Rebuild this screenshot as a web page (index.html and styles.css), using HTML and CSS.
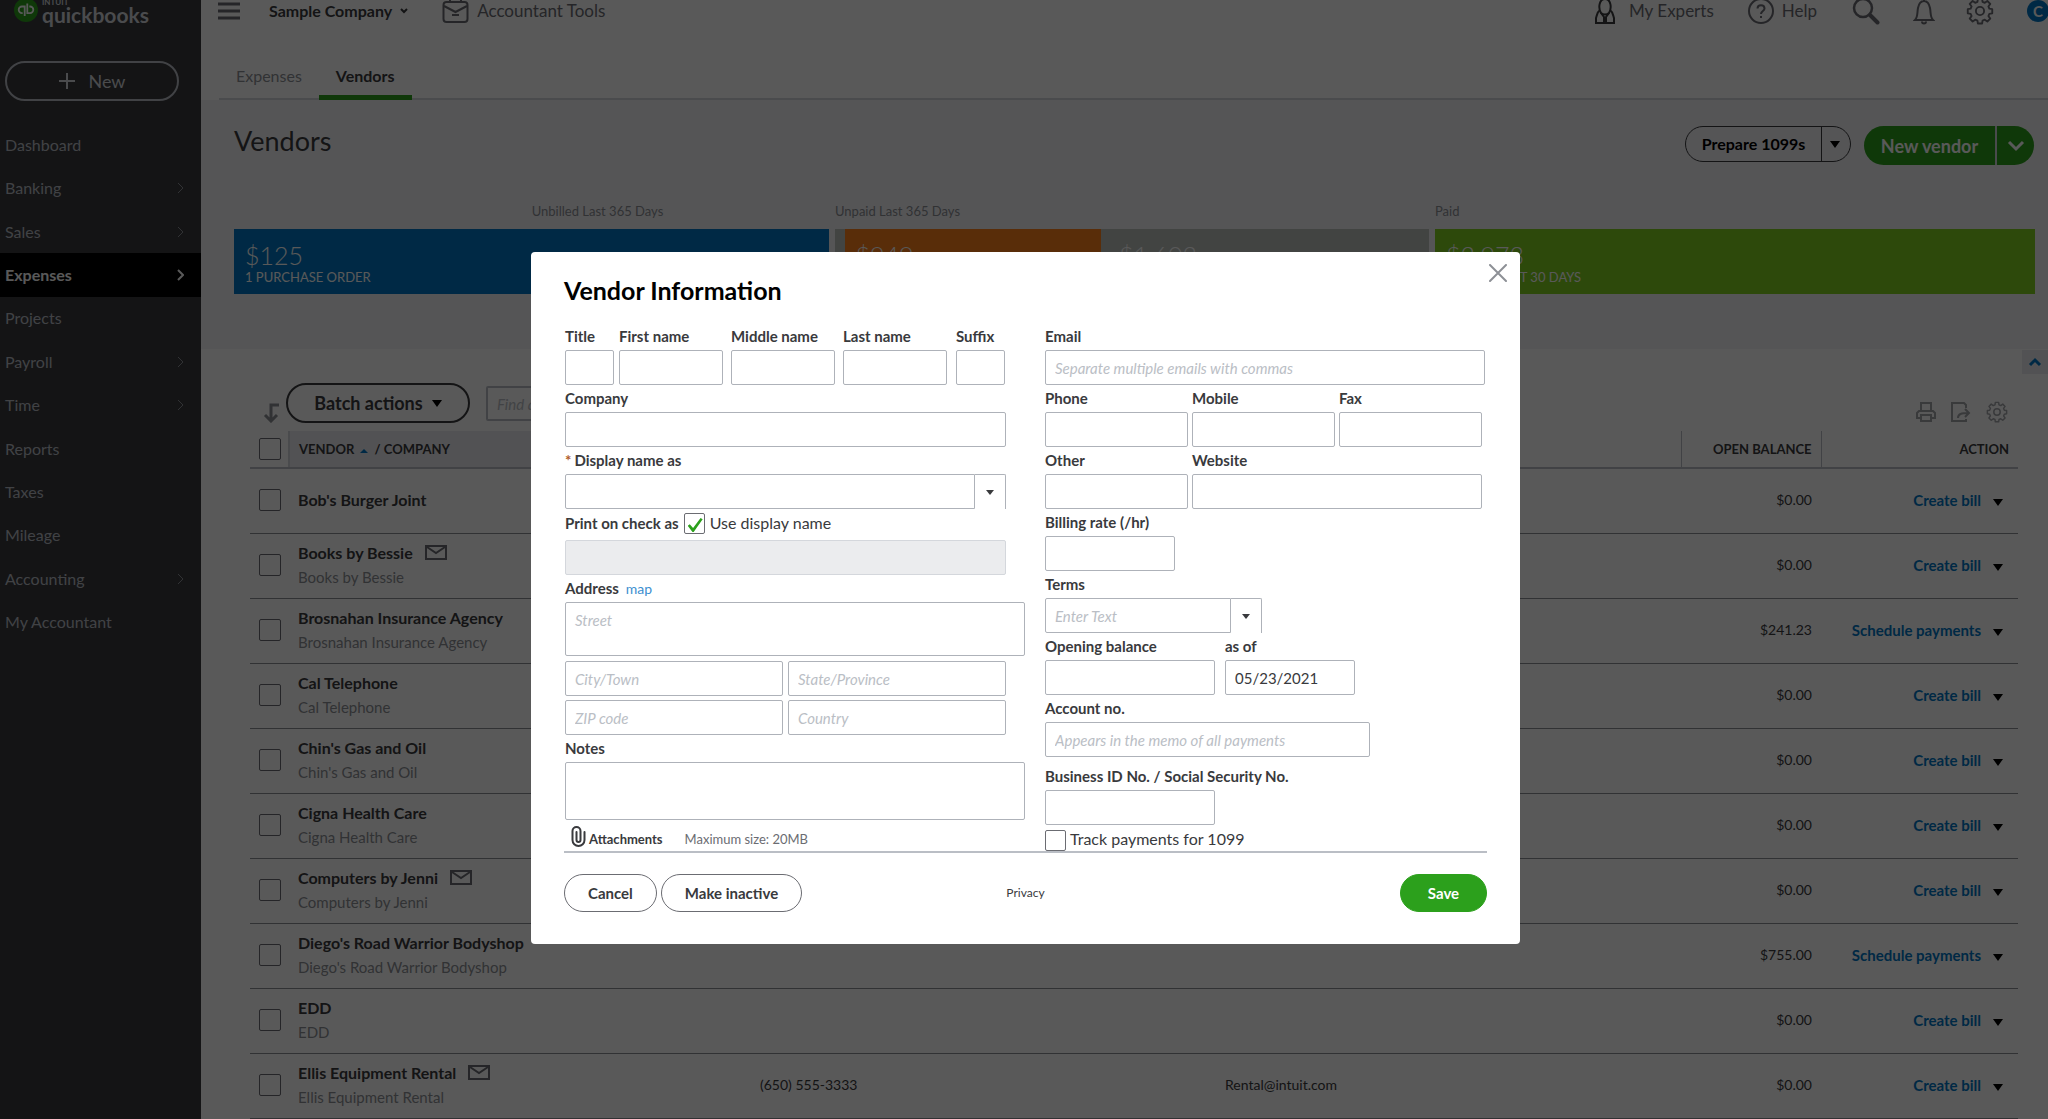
FILE: index.html
```html
<!DOCTYPE html>
<html lang="en">
<head>
<meta charset="utf-8">
<title>Vendors</title>
<link rel="stylesheet" href="styles.css">
</head>
<body>
<div class="app">
  <aside class="sidebar">
    <div class="brand">
      <svg class="brand-mark" viewBox="0 0 24 24"><circle cx="12" cy="12" r="12" fill="#2ca01c"/><g fill="none" stroke="#fff" stroke-width="1.800"><path d="M10.700 18V8.500H8a3.300 3.300 0 0 0 0 6.600h.7"/><path d="M13.300 5.500v9.600H16a3.300 3.300 0 0 0 0-6.600h-.7"/></g></svg>
      <div class="brand-name"><span class="brand-top">INTUIT</span><span class="brand-main">quickbooks</span></div>
    </div>
    <button class="new-btn" type="button"><svg width="18" height="18" viewBox="0 0 18 18"><path d="M9 1v16M1 9h16" stroke="currentColor" stroke-width="2"/></svg>New</button>
    <nav class="nav">
      <a href="#">Dashboard</a>
      <a href="#">Banking<svg class="chev" viewBox="0 0 7 12"><path d="M1 1l5 5-5 5"/></svg></a>
      <a href="#">Sales<svg class="chev" viewBox="0 0 7 12"><path d="M1 1l5 5-5 5"/></svg></a>
      <a href="#" class="active">Expenses<svg class="chev" viewBox="0 0 7 12"><path d="M1 1l5 5-5 5"/></svg></a>
      <a href="#">Projects</a>
      <a href="#">Payroll<svg class="chev" viewBox="0 0 7 12"><path d="M1 1l5 5-5 5"/></svg></a>
      <a href="#">Time<svg class="chev" viewBox="0 0 7 12"><path d="M1 1l5 5-5 5"/></svg></a>
      <a href="#">Reports</a>
      <a href="#">Taxes</a>
      <a href="#">Mileage</a>
      <a href="#">Accounting<svg class="chev" viewBox="0 0 7 12"><path d="M1 1l5 5-5 5"/></svg></a>
      <a href="#">My Accountant</a>
    </nav>
  </aside>

  <main class="main">
    <header class="topbar">
      <svg class="burger" width="22" height="18" viewBox="0 0 22 18"><path d="M0 2h22M0 9h22M0 16h22" stroke="#6b6c72" stroke-width="3"/></svg>
      <button class="company" type="button">Sample Company <svg width="8" height="6" viewBox="0 0 8 6"><path d="M1 1l3 3 3-3" fill="none" stroke="#393a3d" stroke-width="2"/></svg></button>
      <a class="tool" href="#"><svg width="27" height="26" viewBox="0 0 27 26"><g fill="none" stroke="#6b6c72" stroke-width="2"><rect x="1.500" y="4" width="24" height="20" rx="3"/><path d="M8 4V0M19 4V0M2 8l11.500 6L25 8M10 17h7"/></g></svg>Accountant Tools</a>
      <div class="top-right">
        <a class="tool experts" href="#"><svg width="20" height="28" viewBox="0 0 20 28"><g fill="none" stroke="#393a3d" stroke-width="2"><path d="M6 16C3 11 4 2 10 2s7 9 4 14c-2 2-6 2-8 0z"/><path d="M5 13c-3 2-3 5-4 8v5h18v-5c-1-3-1-6-4-8M6 16l3 4v6M14 16l-3 4v6"/></g></svg>My Experts</a>
        <a class="tool help" href="#"><svg width="26" height="26" viewBox="0 0 26 26"><g fill="none" stroke="#6b6c72" stroke-width="2"><circle cx="13" cy="13" r="12"/><path d="M9.500 10.500c0-4.500 7-4.500 7 0 0 2.500-3.500 2.500-3.500 5.500M13 18v2"/></g></svg>Help</a>
        <svg class="t-search" width="28" height="28" viewBox="0 0 28 28"><g fill="none" stroke="#6b6c72"><circle cx="11" cy="11" r="9" stroke-width="2.500"/><path d="M18 18l7.500 7.500" stroke-width="4" stroke-linecap="round"/></g></svg>
        <svg class="t-bell" width="22" height="28" viewBox="0 0 22 28"><path d="M2 23h18c-3-3-2-7-3-12C16 6 14 4 11 4s-5 2-6 7c-1 5 0 9-3 12zM9 24.500a2 2 0 0 0 4 0M11 4V1" fill="none" stroke="#6b6c72" stroke-width="2"/></svg>
        <svg class="t-gear" width="28" height="28" viewBox="0 0 24 24"><g fill="none" stroke="#6b6c72" stroke-width="1.600" stroke-linejoin="round"><path d="M10.200 1.500h3.600l.4 2.700 1.900.8 2.200-1.600 2.500 2.500-1.600 2.200.8 1.900 2.500.4v3.600l-2.500.4-.8 1.900 1.600 2.200-2.500 2.500-2.200-1.600-1.900.8-.4 2.500h-3.600l-.4-2.500-1.900-.8-2.200 1.600-2.500-2.500 1.600-2.200-.8-1.900-2.500-.4v-3.600l2.500-.4.8-1.900-1.600-2.200 2.500-2.500 2.200 1.600 1.900-.8z"/><circle cx="12" cy="12" r="3.500"/></g></svg>
        <span class="avatar">C</span>
      </div>
    </header>

    <nav class="tabs">
      <a href="#">Expenses</a>
      <a href="#" class="current">Vendors</a>
    </nav>

    <section class="hero">
      <div class="hero-head">
        <h1>Vendors</h1>
        <div class="split outline"><button type="button">Prepare 1099s</button><button type="button" aria-label="More 1099 options"><svg width="10" height="7" viewBox="0 0 10 7"><path d="M0 0h10L5 7z" fill="#000"/></svg></button></div>
        <div class="split solid"><button type="button">New vendor</button><button type="button" aria-label="More vendor options"><svg width="18" height="12" viewBox="0 0 18 12"><path d="M2 2l7 7 7-7" fill="none" stroke="#fff" stroke-width="3"/></svg></button></div>
      </div>
      <div class="money">
        <div class="group unbilled"><span class="cap">Unbilled Last 365 Days</span>
          <div class="bars"><div class="bar blue"><b>$125</b><span>1 PURCHASE ORDER</span></div></div></div>
        <div class="group unpaid"><span class="cap">Unpaid Last 365 Days</span>
          <div class="bars"><div class="bar sliver"></div><div class="bar orange"><b>$949</b><span>3 OVERDUE</span></div><div class="bar grey"><b>$1,603</b><span>5 OPEN BILLS</span></div></div></div>
        <div class="group paid"><span class="cap">Paid</span>
          <div class="bars"><div class="bar green"><b>$3,973</b><span>12 PAID LAST 30 DAYS</span></div></div></div>
      </div>
    </section>

    <section class="list">
      <button class="collapse" type="button" aria-label="Collapse"><svg width="14" height="10" viewBox="0 0 14 10"><path d="M2 8l5-5 5 5" fill="none" stroke="#0077c5" stroke-width="3"/></svg></button>
      <div class="tools">
        <svg class="move" width="18" height="20" viewBox="0 0 18 20"><path d="M16 2H8v16M2 12l6 6 6-6" fill="none" stroke="#8d9096" stroke-width="3"/></svg>
        <button class="batch" type="button">Batch actions <svg width="10" height="7" viewBox="0 0 10 7"><path d="M0 0h10L5 7z" fill="#000"/></svg></button>
        <input class="find" type="text" aria-label="Find a vendor" placeholder="Find a vendor or company">
        <div class="list-icons">
          <svg width="20" height="20" viewBox="0 0 20 20"><g fill="none" stroke="#a3a5aa" stroke-width="2"><path d="M5 9V1h10v8"/><path d="M5 16H1v-5l2-2h14l2 2v5h-4"/><path d="M5 13h10v6H5z"/></g></svg>
          <svg width="20" height="20" viewBox="0 0 20 20"><g fill="none" stroke="#a3a5aa" stroke-width="2"><path d="M15 6V3l-2-2H1v18h14v-2"/><path d="M7 16c0-4 3-5 11-5M14 7l4 4-4 4"/></g></svg>
          <svg width="22" height="22" viewBox="0 0 24 24"><g fill="none" stroke="#a3a5aa" stroke-width="1.600" stroke-linejoin="round"><path d="M10.200 1.500h3.600l.4 2.700 1.900.8 2.200-1.600 2.500 2.500-1.600 2.200.8 1.900 2.500.4v3.600l-2.500.4-.8 1.900 1.600 2.200-2.500 2.500-2.200-1.600-1.900.8-.4 2.500h-3.600l-.4-2.500-1.900-.8-2.200 1.600-2.500-2.500 1.600-2.200-.8-1.900-2.500-.4v-3.600l2.500-.4.8-1.900-1.600-2.200 2.500-2.500 2.200 1.600 1.900-.8z"/><circle cx="12" cy="12" r="3.500"/></g></svg>
        </div>
      </div>
      <table class="vendors">
        <colgroup><col class="c-check"><col class="c-name"><col class="c-phone"><col class="c-mail"><col class="c-bal"><col class="c-act"></colgroup>
        <thead><tr><th><input type="checkbox" aria-label="Select all"></th><th class="sorted">VENDOR <svg width="8" height="4" viewBox="0 0 8 4"><path d="M0 4l4-4 4 4z" fill="#0077c5"/></svg> / COMPANY</th><th></th><th></th><th class="num">OPEN BALANCE</th><th class="act">ACTION</th></tr></thead>
        <tbody>
          <tr><td><input type="checkbox" aria-label="Bob's Burger Joint"></td><td><strong>Bob's Burger Joint</strong></td><td></td><td></td><td class="num">$0.00</td><td class="act"><a href="#">Create bill</a><i class="caret"></i></td></tr>
          <tr><td><input type="checkbox" aria-label="Books by Bessie"></td><td><strong>Books by Bessie<svg class="mail" viewBox="0 0 22 15"><path d="M1 1h20v13H1zM2 2l9 6 9-6"/></svg></strong><small>Books by Bessie</small></td><td></td><td></td><td class="num">$0.00</td><td class="act"><a href="#">Create bill</a><i class="caret"></i></td></tr>
          <tr><td><input type="checkbox" aria-label="Brosnahan Insurance Agency"></td><td><strong>Brosnahan Insurance Agency</strong><small>Brosnahan Insurance Agency</small></td><td></td><td></td><td class="num">$241.23</td><td class="act"><a href="#">Schedule payments</a><i class="caret"></i></td></tr>
          <tr><td><input type="checkbox" aria-label="Cal Telephone"></td><td><strong>Cal Telephone</strong><small>Cal Telephone</small></td><td></td><td></td><td class="num">$0.00</td><td class="act"><a href="#">Create bill</a><i class="caret"></i></td></tr>
          <tr><td><input type="checkbox" aria-label="Chin's Gas and Oil"></td><td><strong>Chin's Gas and Oil</strong><small>Chin's Gas and Oil</small></td><td></td><td></td><td class="num">$0.00</td><td class="act"><a href="#">Create bill</a><i class="caret"></i></td></tr>
          <tr><td><input type="checkbox" aria-label="Cigna Health Care"></td><td><strong>Cigna Health Care</strong><small>Cigna Health Care</small></td><td></td><td></td><td class="num">$0.00</td><td class="act"><a href="#">Create bill</a><i class="caret"></i></td></tr>
          <tr><td><input type="checkbox" aria-label="Computers by Jenni"></td><td><strong>Computers by Jenni<svg class="mail" viewBox="0 0 22 15"><path d="M1 1h20v13H1zM2 2l9 6 9-6"/></svg></strong><small>Computers by Jenni</small></td><td></td><td></td><td class="num">$0.00</td><td class="act"><a href="#">Create bill</a><i class="caret"></i></td></tr>
          <tr><td><input type="checkbox" aria-label="Diego's Road Warrior Bodyshop"></td><td><strong>Diego's Road Warrior Bodyshop</strong><small>Diego's Road Warrior Bodyshop</small></td><td></td><td></td><td class="num">$755.00</td><td class="act"><a href="#">Schedule payments</a><i class="caret"></i></td></tr>
          <tr><td><input type="checkbox" aria-label="EDD"></td><td><strong>EDD</strong><small>EDD</small></td><td></td><td></td><td class="num">$0.00</td><td class="act"><a href="#">Create bill</a><i class="caret"></i></td></tr>
          <tr><td><input type="checkbox" aria-label="Ellis Equipment Rental"></td><td><strong>Ellis Equipment Rental<svg class="mail" viewBox="0 0 22 15"><path d="M1 1h20v13H1zM2 2l9 6 9-6"/></svg></strong><small>Ellis Equipment Rental</small></td><td>(650) 555-3333</td><td>Rental@intuit.com</td><td class="num">$0.00</td><td class="act"><a href="#">Create bill</a><i class="caret"></i></td></tr>
        </tbody>
      </table>
    </section>
  </main>
</div>

<div class="overlay">
  <form class="modal" role="dialog" aria-labelledby="dlg-title">
    <header class="modal-head">
      <h2 id="dlg-title">Vendor Information</h2>
      <button class="close" type="button" aria-label="Close"><svg width="18" height="18" viewBox="0 0 18 18"><path d="M1 1l16 16M17 1L1 17" stroke="#8d9096" stroke-width="2" stroke-linecap="round"/></svg></button>
    </header>
    <div class="cols">
      <div class="col">
        <div class="row names">
          <div class="field"><label for="title">Title</label><input id="title" type="text"></div>
          <div class="field"><label for="first">First name</label><input id="first" type="text"></div>
          <div class="field"><label for="middle">Middle name</label><input id="middle" type="text"></div>
          <div class="field"><label for="last">Last name</label><input id="last" type="text"></div>
          <div class="field"><label for="suffix">Suffix</label><input id="suffix" type="text"></div>
        </div>
        <div class="field inset"><label for="company">Company</label><input id="company" type="text"></div>
        <div class="field inset"><label for="display"><span class="req">*</span> Display name as</label>
          <div class="combo"><input id="display" type="text"><button type="button" aria-label="Show names"><i class="caret small"></i></button></div></div>
        <div class="field inset check-as">
          <div class="line"><label for="printas">Print on check as</label><input id="usedisp" type="checkbox" checked><label class="plain" for="usedisp">Use display name</label></div>
          <input id="printas" type="text" disabled></div>
        <div class="field"><div class="line"><label for="street">Address</label><a class="map" href="#">map</a></div><textarea id="street" placeholder="Street"></textarea></div>
        <div class="pair inset"><input type="text" aria-label="City" placeholder="City/Town"><input type="text" aria-label="State" placeholder="State/Province"><input type="text" aria-label="ZIP" placeholder="ZIP code"><input type="text" aria-label="Country" placeholder="Country"></div>
        <div class="field"><label for="notes">Notes</label><textarea id="notes" class="notes"></textarea></div>
        <div class="attach"><svg width="15" height="21" viewBox="0 0 15 21"><path d="M5.500 6v8a2 2 0 0 0 4 0V5a4 4 0 0 0-8 0v9a6 6 0 0 0 12 0V6" fill="none" stroke="#393a3d" stroke-width="2" stroke-linecap="round"/></svg><b>Attachments</b><span>Maximum size: 20MB</span></div>
      </div>
      <div class="col">
        <div class="field"><label for="email">Email</label><input id="email" type="text" placeholder="Separate multiple emails with commas"></div>
        <div class="row phones">
          <div class="field"><label for="phone">Phone</label><input id="phone" type="text"></div>
          <div class="field"><label for="mobile">Mobile</label><input id="mobile" type="text"></div>
          <div class="field"><label for="fax">Fax</label><input id="fax" type="text"></div>
          <div class="field"><label for="other">Other</label><input id="other" type="text"></div>
          <div class="field wide"><label for="site">Website</label><input id="site" type="text"></div>
        </div>
        <div class="field w-s"><label for="rate">Billing rate (/hr)</label><input id="rate" type="text"></div>
        <div class="field w-l"><label for="terms">Terms</label>
          <div class="combo"><input id="terms" type="text" placeholder="Enter Text"><button type="button" aria-label="Show terms"><i class="caret small"></i></button></div></div>
        <div class="row balance">
          <div class="field w-m"><label for="open">Opening balance</label><input id="open" type="text"></div>
          <div class="field w-s"><label for="asof">as of</label><input id="asof" type="text" value="05/23/2021"></div>
        </div>
        <div class="field w-xl"><label for="acct">Account no.</label><input id="acct" type="text" placeholder="Appears in the memo of all payments"></div>
        <div class="field w-m spaced"><label for="bid">Business ID No. / Social Security No.</label><input id="bid" type="text"></div>
        <div class="track"><input id="track" type="checkbox"><label class="plain" for="track">Track payments for 1099</label></div>
      </div>
    </div>
    <footer class="modal-foot">
      <div class="left"><button type="button" class="pill">Cancel</button><button type="button" class="pill">Make inactive</button></div>
      <a href="#">Privacy</a>
      <button type="submit" class="save">Save</button>
    </footer>
  </form>
</div>
</body>
</html>
```
FILE: styles.css
```css
* { box-sizing: border-box; }
html, body { height: 100%; }
body { margin: 0; overflow: hidden; font: 15px/20px Lato, "Open Sans", sans-serif; color: #393a3d; background: #fff; }
button, input, textarea { font: inherit; color: inherit; margin: 0; }
button { background: none; border: 0; padding: 0; cursor: pointer; display: flex; align-items: center; justify-content: center; }
a { color: inherit; text-decoration: none; }
svg { flex: none; display: block; }
input[type="checkbox"] { appearance: none; flex: none; display: block; width: 22px; height: 22px; border: 1px solid #6b6c72; border-radius: 2px; background: #fff; }

.app { display: flex; min-height: 100%; }

/* sidebar */
.sidebar { width: 201px; flex: none; background: #393a3e; color: #babec5; }
.brand { display: flex; align-items: center; gap: 4px; height: 20px; padding-left: 14px; color: #d4d7dc; }
.brand-mark { width: 24px; height: 24px; }
.brand-name { display: flex; flex-direction: column; }
.brand-top { font-size: 8px; line-height: 10px; font-weight: 700; }
.brand-main { font-size: 21px; line-height: 16px; font-weight: 700; }
.new-btn { width: 174px; height: 40px; margin: 41px 0 22px 5px; gap: 12px; border: 2px solid #babec5; border-radius: 20px; font-size: 18px; color: #d4d7dc; }
.nav { display: grid; grid-auto-rows: 1fr; height: 521px; font-size: 16px; }
.nav a { display: flex; align-items: center; justify-content: space-between; padding: 0 17px 0 5px; }
.nav .active { background: #000; color: #fff; font-weight: 700; }
.chev { width: 7px; height: 12px; fill: none; stroke: #8d9096; stroke-width: 1; }
.active .chev { stroke: #fff; stroke-width: 2; }

/* top bar */
.main { flex: 1; min-width: 0; }
.topbar { display: flex; align-items: center; height: 21px; padding-left: 17px; }
.company { margin: 0 34px 0 29px; gap: 8px; font-size: 16px; font-weight: 700; }
.tool { display: flex; align-items: center; gap: 8px; font-size: 17px; color: #6b6c72; }
.top-right { display: flex; align-items: center; margin-left: auto; }
.experts { gap: 14px; margin-right: 34px; }
.help { margin-right: 35px; }
.t-search { margin-right: 33px; }
.t-bell { margin-right: 31px; }
.t-gear { margin-right: 33px; }
.avatar { width: 22px; height: 22px; margin-right: -1px; border-radius: 50%; background: #0077c5; color: #fff; font-size: 15px; line-height: 22px; font-weight: 700; text-align: center; }

.tabs { display: flex; height: 79px; margin-left: 18px; align-items: flex-end; border-bottom: 2px solid #d4d7dc; color: #8d9096; font-size: 16px; }
.tabs a { padding: 0 17px; height: 34px; margin-bottom: -2px; border-bottom: 5px solid transparent; }
.tabs .current { color: #393a3d; font-weight: 700; border-color: #2ca01c; }

/* page heading and money bar */
.hero { height: 249px; padding: 26px 13px 0 33px; background: #f4f4f7; }
.hero-head { display: flex; align-items: flex-start; gap: 13px; height: 75px; padding-right: 1px; }
.hero h1 { margin: 0 auto 0 0; font-size: 27px; line-height: 30px; font-weight: 400; }
.split { display: flex; border-radius: 20px; font-weight: 700; }
.split button:first-child { flex: 1; }
.outline { width: 166px; height: 36px; border: 1px solid #393a3d; font-size: 16px; color: #000; }
.outline button + button { width: 29px; border-left: 1px solid #393a3d; padding-right: 2px; }
.solid { width: 170px; height: 39px; background: #2ca01c; color: #fff; font-size: 18px; }
.solid button + button { width: 39px; border-left: 2px solid #d4d7dc; }
.money { display: flex; gap: 6px; }
.group { display: flex; flex-direction: column; }
.unbilled { flex: 595; }
.unpaid { flex: 594; }
.paid { flex: 600; }
.cap { height: 28px; font-size: 13px; color: #8d9096; }
.unbilled .cap { align-self: center; padding-left: 132px; }
.bars { display: flex; height: 65px; }
.bar { flex: 1; padding: 12px 0 0 11px; color: #fff; white-space: nowrap; overflow: hidden; }
.bar b { display: block; font-size: 25px; line-height: 28px; font-weight: 300; }
.bar span { display: block; font-size: 13px; line-height: 16px; }
.blue { background: #0077c5; }
.sliver { flex: 10; padding: 0; background: #bdc2bd; }
.orange { flex: 258; background: #ff801c; }
.grey { flex: 326; padding-left: 18px; background: #bdc2bd; }
.green { background: #80d022; }

/* list */
.list { position: relative; padding: 34px 30px 0 49px; }
.collapse { position: absolute; top: 1px; right: 0; width: 26px; height: 24px; background: #ececf0; }
.tools { display: flex; height: 48px; padding-left: 13px; }
.move { margin: 20px 5px 0 0; }
.batch { width: 184px; height: 40px; gap: 9px; border: 2px solid #393a3d; border-radius: 20px; font-size: 18px; font-weight: 700; }
.find { width: 300px; height: 35px; margin: 3px 0 0 16px; padding: 0 9px; border: 2px solid #babec5; border-radius: 2px; font-size: 15px; }
.list-icons { display: flex; align-items: center; gap: 15px; height: 20px; margin: 19px 10px 0 auto; }
.vendors { width: 100%; table-layout: fixed; border-collapse: collapse; font-size: 14px; }
.c-check { width: 39px; }
.c-name { width: 471px; }
.c-phone { width: 465px; }
.c-bal { width: 140px; }
.c-act { width: 197px; }
.vendors th { height: 37px; padding: 0; text-align: left; font-size: 13px; font-weight: 700; border-bottom: 2px solid #babec5; }
.vendors td { height: 65px; padding: 0 0 2px; border-bottom: 1px solid #8d9096; }
.vendors tbody tr td:first-child { padding-left: 9px; }
.vendors th:first-child { padding-left: 9px; }
.vendors th.sorted { padding-left: 9px; background: #ececf0; border-left: 2px solid #d4d7dc; }
.vendors th svg { display: inline-block; vertical-align: middle; margin: 0 3px; }
.vendors td:nth-child(2) { padding-left: 9px; }
.vendors td.num, .vendors th.num { padding-right: 9px; text-align: right; }
.vendors th.num { border-left: 1px solid #babec5; border-right: 1px solid #babec5; }
.vendors th.act { padding-right: 9px; text-align: right; }
.vendors td.act { padding-right: 15px; text-align: right; font-size: 15px; font-weight: 700; color: #0077c5; }
.vendors strong { display: flex; align-items: center; gap: 12px; font-size: 16px; line-height: 24px; }
.vendors small { display: block; font-size: 15px; line-height: 24px; color: #8d9096; }
.mail { width: 22px; height: 15px; fill: none; stroke: #6b6c72; stroke-width: 2; }
.caret { display: inline-block; margin-left: 12px; border: 5px solid transparent; border-top: 7px solid #000; border-bottom: 0; }
.caret.small { margin: 0; border-width: 5px 4px 0; border-top-color: #393a3d; }

/* dialog */
.overlay { position: fixed; inset: 0; display: flex; align-items: flex-start; justify-content: center; padding: 252px 0 0 3px; background: rgba(0, 0, 0, .65); }
.modal { width: 989px; padding: 20px 33px 32px; border-radius: 4px; background: #fff; }
.modal-head { display: flex; justify-content: space-between; height: 51px; }
.modal-head h2 { margin: 0; font-size: 25px; line-height: 36px; font-weight: 700; color: #000; }
.close { width: 18px; height: 18px; margin: -8px -20px 0 0; }
.cols { display: grid; grid-template-columns: 460px 440px; gap: 20px; padding-left: 1px; border-bottom: 2px solid #babec5; }
.field label, .field .line { display: flex; height: 27px; align-items: center; font-weight: 700; }
.field label { gap: 3px; padding-bottom: 2px; white-space: nowrap; }
.modal input[type="text"], textarea { display: block; width: 100%; height: 35px; padding: 0 9px; border: 1px solid #aeb2b9; border-radius: 2px; background: #fff; outline: 0; }
::placeholder { color: #babec5; font-style: italic; opacity: 1; }
.modal textarea { height: 54px; padding: 7px 9px; resize: none; }
.modal textarea.notes { height: 58px; }
.modal input[type="checkbox"] { width: 21px; height: 21px; }
.modal input[type="checkbox"]:checked::before { content: ""; display: block; width: 15px; height: 14px; margin: 4px 0 0 3px; background: #2ca01c; clip-path: polygon(0 55%, 14% 44%, 36% 72%, 86% 0, 100% 9%, 40% 100%, 32% 100%); }
.inset { margin-right: 19px; }
.row { display: grid; }
.names { grid-template-columns: 54px 112px 112px 113px 49px; }
.names .field { max-width: 104px; }
.names .field:first-child { max-width: 49px; }
.phones { grid-template-columns: repeat(3, 1fr); column-gap: 4px; margin-right: 3px; }
.wide { grid-column: span 2; }
.balance { grid-template-columns: 170px 130px; column-gap: 10px; }
.w-s { width: 130px; }
.w-m { width: 170px; }
.w-l { width: 217px; }
.w-xl { width: 325px; }
.spaced { margin-top: 6px; }
.req { color: #b05a2a; }
.combo { display: flex; }
.combo button { flex: none; width: 31px; border: 1px solid #aeb2b9; border-width: 1px 1px 0 0; border-radius: 0 2px 0 0; }
.combo input[type="text"] { flex: 1; border-radius: 2px 0 0 2px; }
.field.check-as .line { height: 31px; gap: 5px; padding-bottom: 2px; }
.field label.plain, .plain { font-weight: 400; font-size: 16px; }
.check-as input[type="text"]:disabled { background: #ebecee; border-color: #d4d7dc; }
.map { margin-left: 7px; font-size: 14px; font-weight: 400; color: #3c8fd0; }
.pair { display: grid; grid-template-columns: 1fr 1fr; gap: 4px 5px; margin-top: 5px; }
.attach { display: flex; align-items: center; height: 30px; padding: 7px 0 0 6px; font-size: 13px; }
.attach b { margin: 0 22px 0 3px; }
.attach svg { margin-top: -5px; }
.attach span { color: #6b6c72; }
.track { display: flex; align-items: center; gap: 4px; margin-top: 4px; }
.track .plain { padding-bottom: 2px; }
.modal-foot { display: grid; grid-template-columns: 1fr auto 1fr; align-items: center; margin-top: 21px; }
.modal-foot .left { display: flex; gap: 4px; }
.pill, .save { height: 38px; padding: 0 23px; border: 1px solid #6b6c72; border-radius: 19px; font-size: 15px; font-weight: 700; }
.save { justify-self: end; width: 87px; border-color: #2ca01c; background: #2ca01c; color: #fff; }
.modal-foot a { font-size: 12px; }
```
